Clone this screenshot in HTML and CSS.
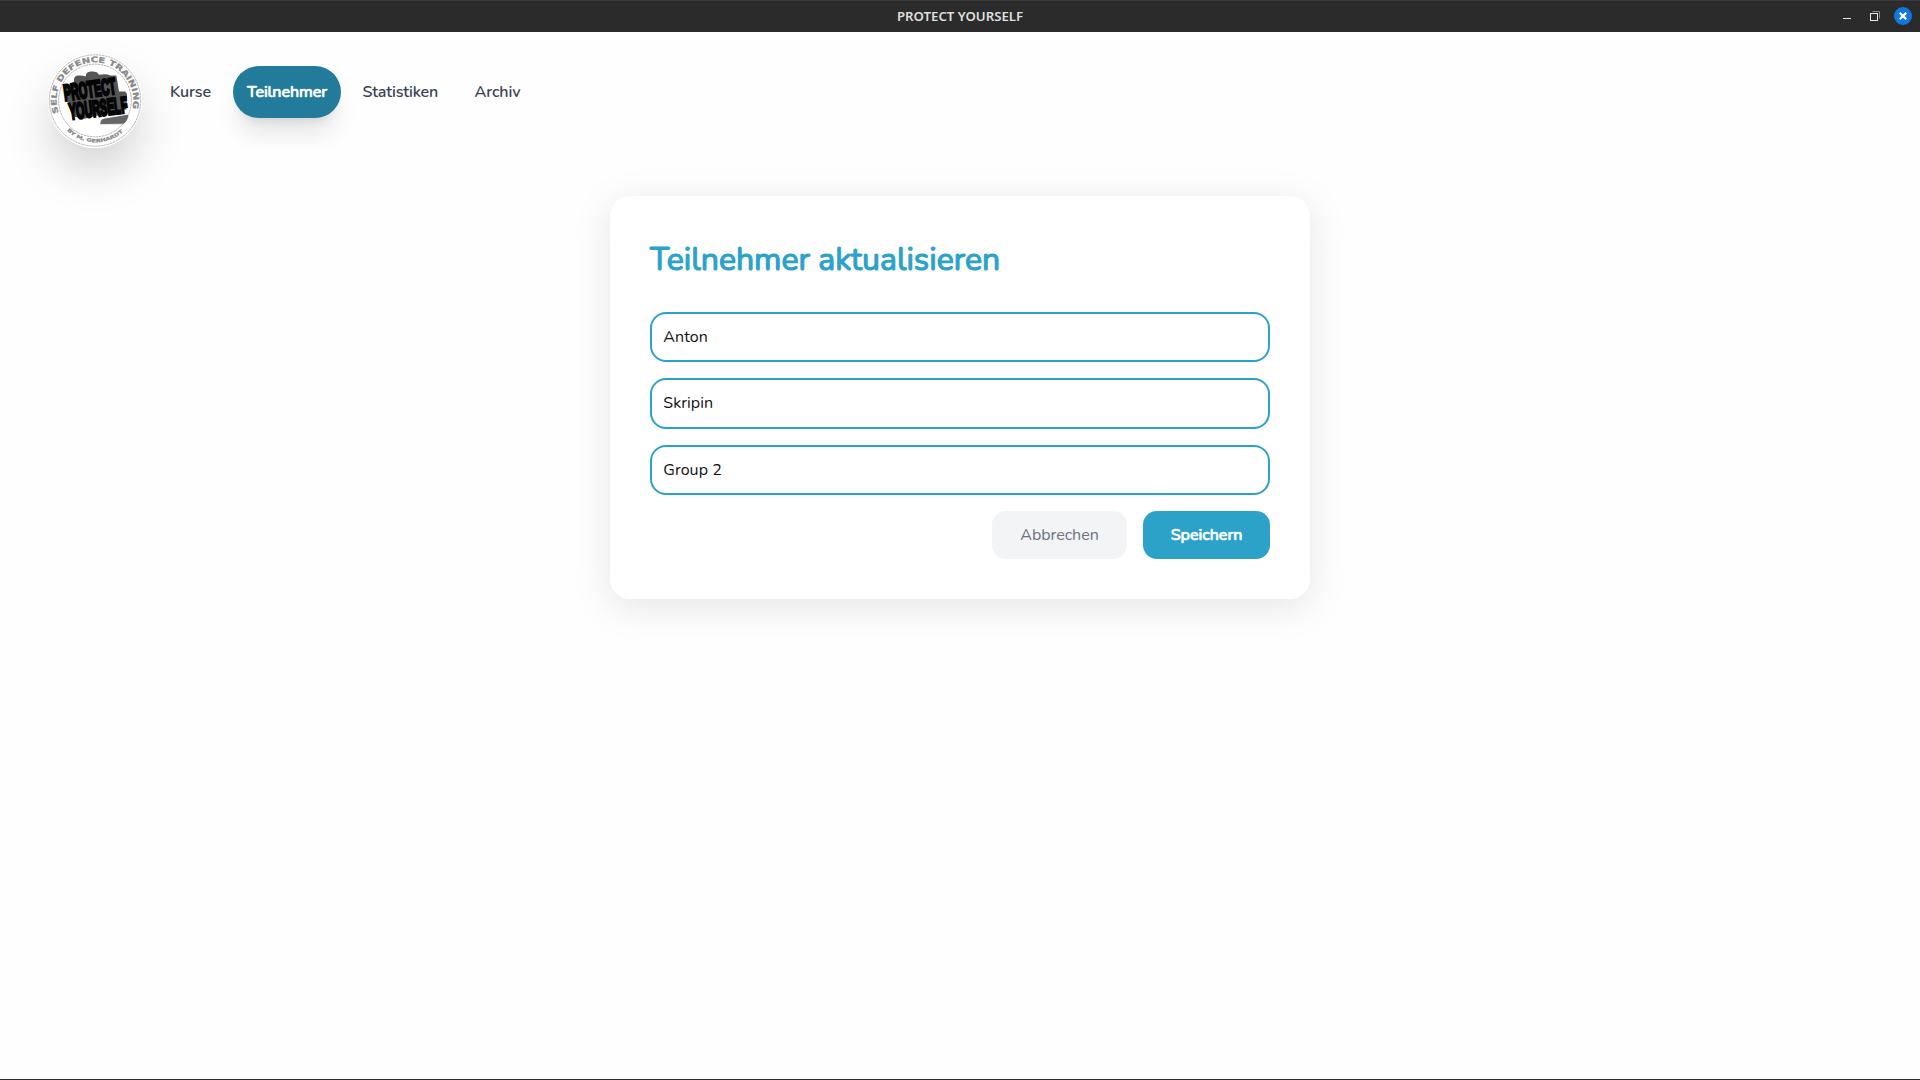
FILE: index.html
```html
<!DOCTYPE html>
<html lang="de">
<head>
<meta charset="utf-8">
<title>PROTECT YOURSELF</title>
<link rel="stylesheet" href="styles.css">
</head>
<body>
<header class="titlebar">
  <span class="titlebar-name">PROTECT YOURSELF</span>
  <svg class="window-controls" width="80" height="32" viewBox="0 0 80 32">
    <path d="M3 18.500h8" stroke="#e4e4e4"/>
    <path d="M32.500 11.500h7v7" fill="none" stroke="#8a8a8a"/>
    <rect x="30.500" y="13.500" width="7" height="7" fill="none" stroke="#e8e8e8"/>
    <circle cx="63" cy="16" r="9" fill="#1177e0"/>
    <path d="M59.700 12.700l6.600 6.600m0-6.600l-6.600 6.600" stroke="#fff" stroke-width="2.200"/>
  </svg>
</header>
<nav class="nav">
  <svg class="logo" viewBox="54 71 282 282">
    <defs>
      <path id="arc-top" d="M86 249A115 115 0 1 1 304 249"/>
      <path id="arc-bottom" d="M94 281A122 122 0 0 0 300 281"/>
    </defs>
    <circle cx="195" cy="212" r="141" fill="#fff"/>
    <g fill="none" stroke="#8d8d8d" stroke-width="2" stroke-dasharray="7 2">
      <circle cx="195" cy="212" r="137"/>
      <circle cx="195" cy="212" r="109"/>
    </g>
    <g class="logo-ring">
      <text font-size="23"><textPath href="#arc-top" textLength="423" lengthAdjust="spacingAndGlyphs">SELF DEFENCE TRAINING</textPath></text>
      <text font-size="14"><textPath href="#arc-bottom" startOffset="27" textLength="186" lengthAdjust="spacingAndGlyphs">BY M. GERHARDT</textPath></text>
    </g>
    <path d="M132 156q-2-18 12-19 14-1 23 3 0-13 15-15 20-2 25 10 22-4 34 2l18 0 8 48 18 0q8 6 6 16l-2 38-26 4-100 24-36-8-26-86z" fill="#555"/>
    <g class="logo-word">
      <text transform="translate(104 213) rotate(-8) scale(.485 1)" font-size="68">PROTECT</text>
      <text transform="translate(120 269) rotate(-7) scale(.475 1)" font-size="68">YOURSELF</text>
    </g>
    <path d="M210 284q-1-16 13-19l74-12q-2 20-16 30z" fill="#666" stroke="#fff" stroke-width="2"/>
  </svg>
  <a class="nav-link kurse">Kurse</a>
  <a class="nav-link teilnehmer active">Teilnehmer</a>
  <a class="nav-link statistiken">Statistiken</a>
  <a class="nav-link archiv">Archiv</a>
</nav>
<main class="main">
  <form class="card">
    <h1 class="card-title">Teilnehmer aktualisieren</h1>
    <div class="fields">
      <div class="field anton">Anton</div>
      <div class="field skripin">Skripin</div>
      <div class="field group">Group 2</div>
    </div>
    <div class="actions">
      <button type="button" class="btn cancel">Abbrechen</button>
      <button type="button" class="btn save">Speichern</button>
    </div>
  </form>
</main>
</body>
</html>
```
FILE: styles.css
```css
* { box-sizing: border-box; }
body {
  margin: 0;
  height: 1080px;
  display: flex;
  flex-direction: column;
  overflow: hidden;
  background: #fefefe;
  border-bottom: 1px solid #2b2b2b;
  font-family: Nunito, Lato, sans-serif;
  font-size: 16px;
}
.titlebar {
  height: 32px;
  flex: none;
  display: grid;
  grid-template-columns: 80px 1fr 80px;
  align-items: center;
  background: #2b2b2b;
  box-shadow: inset 0 1px #3a3a3a;
}
.titlebar-name {
  grid-column: 2;
  padding-top: 1px;
  text-align: center;
  color: #dfdfdf;
  font: 600 13.200px/31px "Noto Sans", sans-serif;
}
.nav {
  height: 164px;
  flex: none;
  display: flex;
  align-items: flex-start;
  padding: 21px 0 0 48px;
}
.logo {
  width: 94px;
  height: 95px;
  border-radius: 50%;
  box-shadow: 0 25px 50px -5px rgba(0, 0, 0, .2);
}
.logo-ring {
  fill: #888;
  stroke: #888;
  stroke-width: .7;
  font-family: "DejaVu Sans", sans-serif;
  font-weight: 700;
}
.logo-word {
  fill: #050505;
  stroke: #050505;
  stroke-width: 8;
  font-family: "Liberation Sans", sans-serif;
  font-weight: 700;
}
.nav-link {
  height: 52px;
  margin-top: 13px;
  padding: 0 14px;
  border-radius: 26px;
  line-height: 52px;
  white-space: nowrap;
  color: #374151;
  font-weight: 600;
  letter-spacing: -.1px;
}
.kurse { width: 69px; margin-left: 14px; }
.teilnehmer { width: 108px; margin-left: 8px; }
.statistiken { width: 104px; margin-left: 8px; padding-left: 13.500px; letter-spacing: -.2px; }
.archiv { width: 73px; margin-left: 8px; padding-left: 13.500px; }
.active {
  background: #227b9a;
  color: #fff;
  font-weight: 500;
  letter-spacing: -.07px;
  -webkit-text-stroke: .7px #fff;
  box-shadow: 0 20px 25px -5px rgba(0, 0, 0, .1), 0 8px 10px -6px rgba(0, 0, 0, .1);
}
.main { display: flex; justify-content: center; }
.card {
  width: 700px;
  height: 403px;
  padding: 40px;
  border-radius: 20px;
  background: #fff;
  box-shadow: 0 8px 40px rgba(0, 0, 0, .1);
}
.card-title {
  margin: 0 0 28px;
  color: #2da2c9;
  font-size: 32px;
  line-height: 48px;
  font-weight: 400;
  -webkit-text-stroke: 1.200px #2da2c9;
  white-space: nowrap;
}
.fields { display: grid; gap: 16px; }
.field {
  height: 50.400px;
  padding: 0 11.200px;
  border: 2px solid #2da2c9;
  border-radius: 16px;
  line-height: 46px;
  color: #111;
  font-weight: 370;
  letter-spacing: .1px;
}
.skripin { line-height: 47.500px; }
.actions {
  display: flex;
  justify-content: flex-end;
  gap: 16px;
  margin-top: 16px;
}
.btn {
  height: 48px;
  padding: 0;
  border: 0;
  border-radius: 14px;
  font: inherit;
  line-height: 48px;
}
.cancel { width: 135px; background: #f3f4f6; color: #6b7280; }
.save {
  width: 127px;
  background: #2da2c9;
  color: #fff;
  font-weight: 500;
  -webkit-text-stroke: .7px #fff;
}
```
